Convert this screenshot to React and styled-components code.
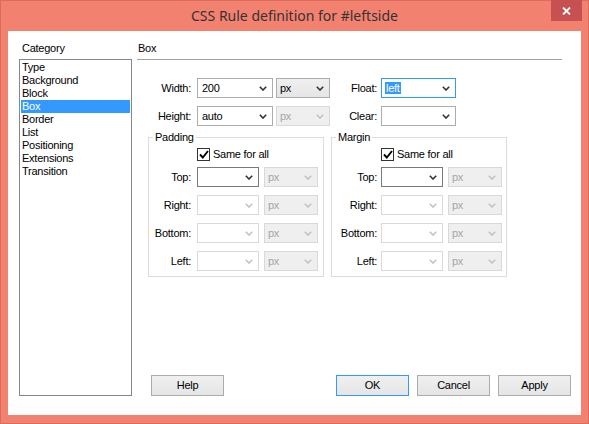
import React from 'react';
import styled, { createGlobalStyle, css } from 'styled-components';

const GlobalStyle = createGlobalStyle`
  html, body { margin: 0; padding: 0; background: #fff; }
  body {
    font-family: "Liberation Sans", Arial, sans-serif;
    font-size: 11px;
    letter-spacing: -0.25px;
    color: #000;
  }
  * { box-sizing: border-box; }
`;

const Window = styled.div`
  width: 589px;
  height: 424px;
  background: #f38170;
  border: 1px solid #d96c5d;
  display: flex;
  flex-direction: column;
`;

const TitleBar = styled.div`
  height: 30px;
  display: grid;
  grid-template-columns: 1fr auto 1fr;
  align-items: start;
`;

const Title = styled.div`
  grid-column: 2;
  font-family: "Noto Sans", "Open Sans", sans-serif;
  font-size: 14px;
  letter-spacing: 0;
  line-height: 29px;
  color: #333;
`;

const CloseButton = styled.div`
  grid-column: 3;
  justify-self: end;
  margin-top: -1px;
  margin-right: 6px;
  width: 31px;
  height: 21px;
  background: #c75050;
  display: flex;
  align-items: center;
  justify-content: center;
`;

const Client = styled.div`
  flex: 1;
  margin: 0 7px 8px 7px;
  background: #fff;
  display: flex;
  gap: 5px;
  padding: 0 10px 19px 11px;
`;

const LeftPane = styled.div`
  width: 113px;
  display: flex;
  flex-direction: column;
`;

const RightPane = styled.div`
  flex: 1;
  display: flex;
  flex-direction: column;
`;

const PaneLabel = styled.div`
  height: 28px;
  padding-top: 11px;
  padding-left: ${p => p.$indent}px;
  line-height: 13px;
`;

const HeaderRule = styled.div`
  height: 1px;
  background: #a0a0a0;
  margin-right: 9px;
`;

const ListBox = styled.div`
  flex: 1;
  border: 1px solid #828790;
  padding: 1px;
`;

const ListItem = styled.div`
  line-height: 13px;
  height: 13px;
  padding-left: 1px;
  ${p => p.$selected && css`
    background: #3399ff;
    color: #fff;
  `}
`;

const Form = styled.div`
  margin-top: 18px;
  display: flex;
`;

const Column = styled.div`
  width: ${p => p.$w}px;
  display: flex;
  flex-direction: column;
  gap: 8px;
`;

const FieldRow = styled.div`
  display: flex;
  align-items: center;
  height: 20px;
`;

const FieldLabel = styled.div`
  width: ${p => p.$w}px;
  margin-right: ${p => p.$gap}px;
  text-align: right;
  line-height: 13px;
`;

const SelectBox = styled.div`
  width: ${p => p.$w}px;
  height: 20px;
  margin-right: ${p => p.$mr || 0}px;
  border: 1px solid #acacac;
  background: #fff;
  display: flex;
  align-items: center;
  justify-content: space-between;
  padding: 0 5px 0 4px;
  line-height: 13px;
  color: #000;
  ${p => p.$variant === 'dark' && css`
    border-color: #7a7a7a;
  `}
  ${p => p.$variant === 'focus' && css`
    border-color: #3399ff;
  `}
  ${p => p.$variant === 'button' && css`
    background: linear-gradient(#f0f0f0, #e5e5e5);
    padding-left: 3px;
  `}
  ${p => p.$variant === 'off' && css`
    border-color: #d9d9d9;
    color: #a5a5a5;
  `}
  ${p => p.$variant === 'offlist' && css`
    border-color: #d9d9d9;
    background: #efefef;
    color: #a5a5a5;
    padding-left: 3px;
  `}
`;

const Highlight = styled.span`
  background: #3399ff;
  color: #fff;
  padding: 0 1px;
  margin-left: -1px;
`;

const Fieldset = styled.fieldset`
  margin: -3px 0 0 ${p => p.$ml}px;
  width: 176px;
  border: 1px solid #dcdcdc;
  padding: 0 0 5px 0;
  min-width: 0;
`;

const Legend = styled.legend`
  margin-left: 4px;
  padding: 0 2px;
  line-height: 13px;
`;

const FieldStack = styled.div`
  display: flex;
  flex-direction: column;
  gap: 8px;
`;

const CheckRow = styled.label`
  display: flex;
  align-items: center;
  height: 13px;
  margin: 4px 0 6px ${p => p.$indent}px;
  gap: 3px;
  line-height: 13px;
`;

const CheckBox = styled.span`
  width: 13px;
  height: 13px;
  border: 1px solid #333;
  background: #fff;
  display: flex;
  align-items: center;
  justify-content: center;
`;

const ButtonRow = styled.div`
  margin-top: auto;
  display: flex;
  gap: 8px;
`;

const Button = styled.div`
  width: 73px;
  height: 21px;
  border: 1px solid ${p => (p.$default ? '#3399ff' : '#acacac')};
  background: linear-gradient(#f0f0f0, #e5e5e5);
  display: flex;
  align-items: center;
  justify-content: center;
  line-height: 13px;
  ${p => p.$help && css`
    margin-left: 14px;
    margin-right: auto;
  `}
`;

const Chevron = ({ off }) => (
  <svg width="8" height="5" viewBox="0 0 8 5">
    <path d="M0.8 0.8 L4 4 L7.2 0.8" fill="none" stroke={off ? '#c2c2c2' : '#333'} strokeWidth="1.6" />
  </svg>
);

const Select = ({ w, variant, mr, children }) => (
  <SelectBox $w={w} $variant={variant} $mr={mr}>
    <span>{children}</span>
    <Chevron off={variant === 'off' || variant === 'offlist'} />
  </SelectBox>
);

const BoxRow = ({ label, lw, gap, children }) => (
  <FieldRow>
    <FieldLabel $w={lw} $gap={gap}>{label}</FieldLabel>
    {children}
  </FieldRow>
);

const SideGroup = ({ legend, ml, lw, gap, mainW, unitW }) => (
  <Fieldset $ml={ml}>
    <Legend>{legend}</Legend>
    <CheckRow $indent={lw + gap}>
      <CheckBox>
        <svg width="10" height="9" viewBox="0 0 10 9">
          <path d="M1 4.5 L3.8 7.5 L9 1" fill="none" stroke="#000" strokeWidth="1.9" />
        </svg>
      </CheckBox>
      Same for all
    </CheckRow>
    <FieldStack>
      <BoxRow label="Top:" lw={lw} gap={gap}>
        <Select w={mainW} variant="dark" mr={5}></Select>
        <Select w={unitW} variant="offlist">px</Select>
      </BoxRow>
      {['Right:', 'Bottom:', 'Left:'].map(l => (
        <BoxRow key={l} label={l} lw={lw} gap={gap}>
          <Select w={mainW} variant="off" mr={5}></Select>
          <Select w={unitW} variant="offlist">px</Select>
        </BoxRow>
      ))}
    </FieldStack>
  </Fieldset>
);

const categories = ['Type', 'Background', 'Block', 'Box', 'Border', 'List', 'Positioning', 'Extensions', 'Transition'];

export default function App() {
  return (
    <>
      <GlobalStyle />
      <Window>
        <TitleBar>
          <Title>CSS Rule definition for #leftside</Title>
          <CloseButton>
            <svg width="9" height="8" viewBox="0 0 9 8">
              <path d="M1 0.5 L8 7.5 M8 0.5 L1 7.5" stroke="#fff" strokeWidth="1.8" />
            </svg>
          </CloseButton>
        </TitleBar>
        <Client>
          <LeftPane>
            <PaneLabel $indent={3}>Category</PaneLabel>
            <ListBox>
              {categories.map(c => (
                <ListItem key={c} $selected={c === 'Box'}>{c}</ListItem>
              ))}
            </ListBox>
          </LeftPane>
          <RightPane>
            <PaneLabel $indent={1}>Box</PaneLabel>
            <HeaderRule />
            <Form>
              <Column $w={194}>
                <BoxRow label="Width:" lw={54} gap={6}>
                  <Select w={76} mr={3}>200</Select>
                  <Select w={54} variant="button">px</Select>
                </BoxRow>
                <BoxRow label="Height:" lw={54} gap={6}>
                  <Select w={76} mr={3}>auto</Select>
                  <Select w={54} variant="offlist">px</Select>
                </BoxRow>
                <SideGroup legend="Padding" ml={11} lw={42} gap={6} mainW={62} unitW={54} />
              </Column>
              <Column $w={176}>
                <BoxRow label="Float:" lw={46} gap={4}>
                  <Select w={75} variant="focus"><Highlight>left</Highlight></Select>
                </BoxRow>
                <BoxRow label="Clear:" lw={46} gap={4}>
                  <Select w={75}></Select>
                </BoxRow>
                <SideGroup legend="Margin" ml={0} lw={45} gap={4} mainW={62} unitW={54} />
              </Column>
            </Form>
            <ButtonRow>
              <Button $help>Help</Button>
              <Button $default>OK</Button>
              <Button>Cancel</Button>
              <Button>Apply</Button>
            </ButtonRow>
          </RightPane>
        </Client>
      </Window>
    </>
  );
}
